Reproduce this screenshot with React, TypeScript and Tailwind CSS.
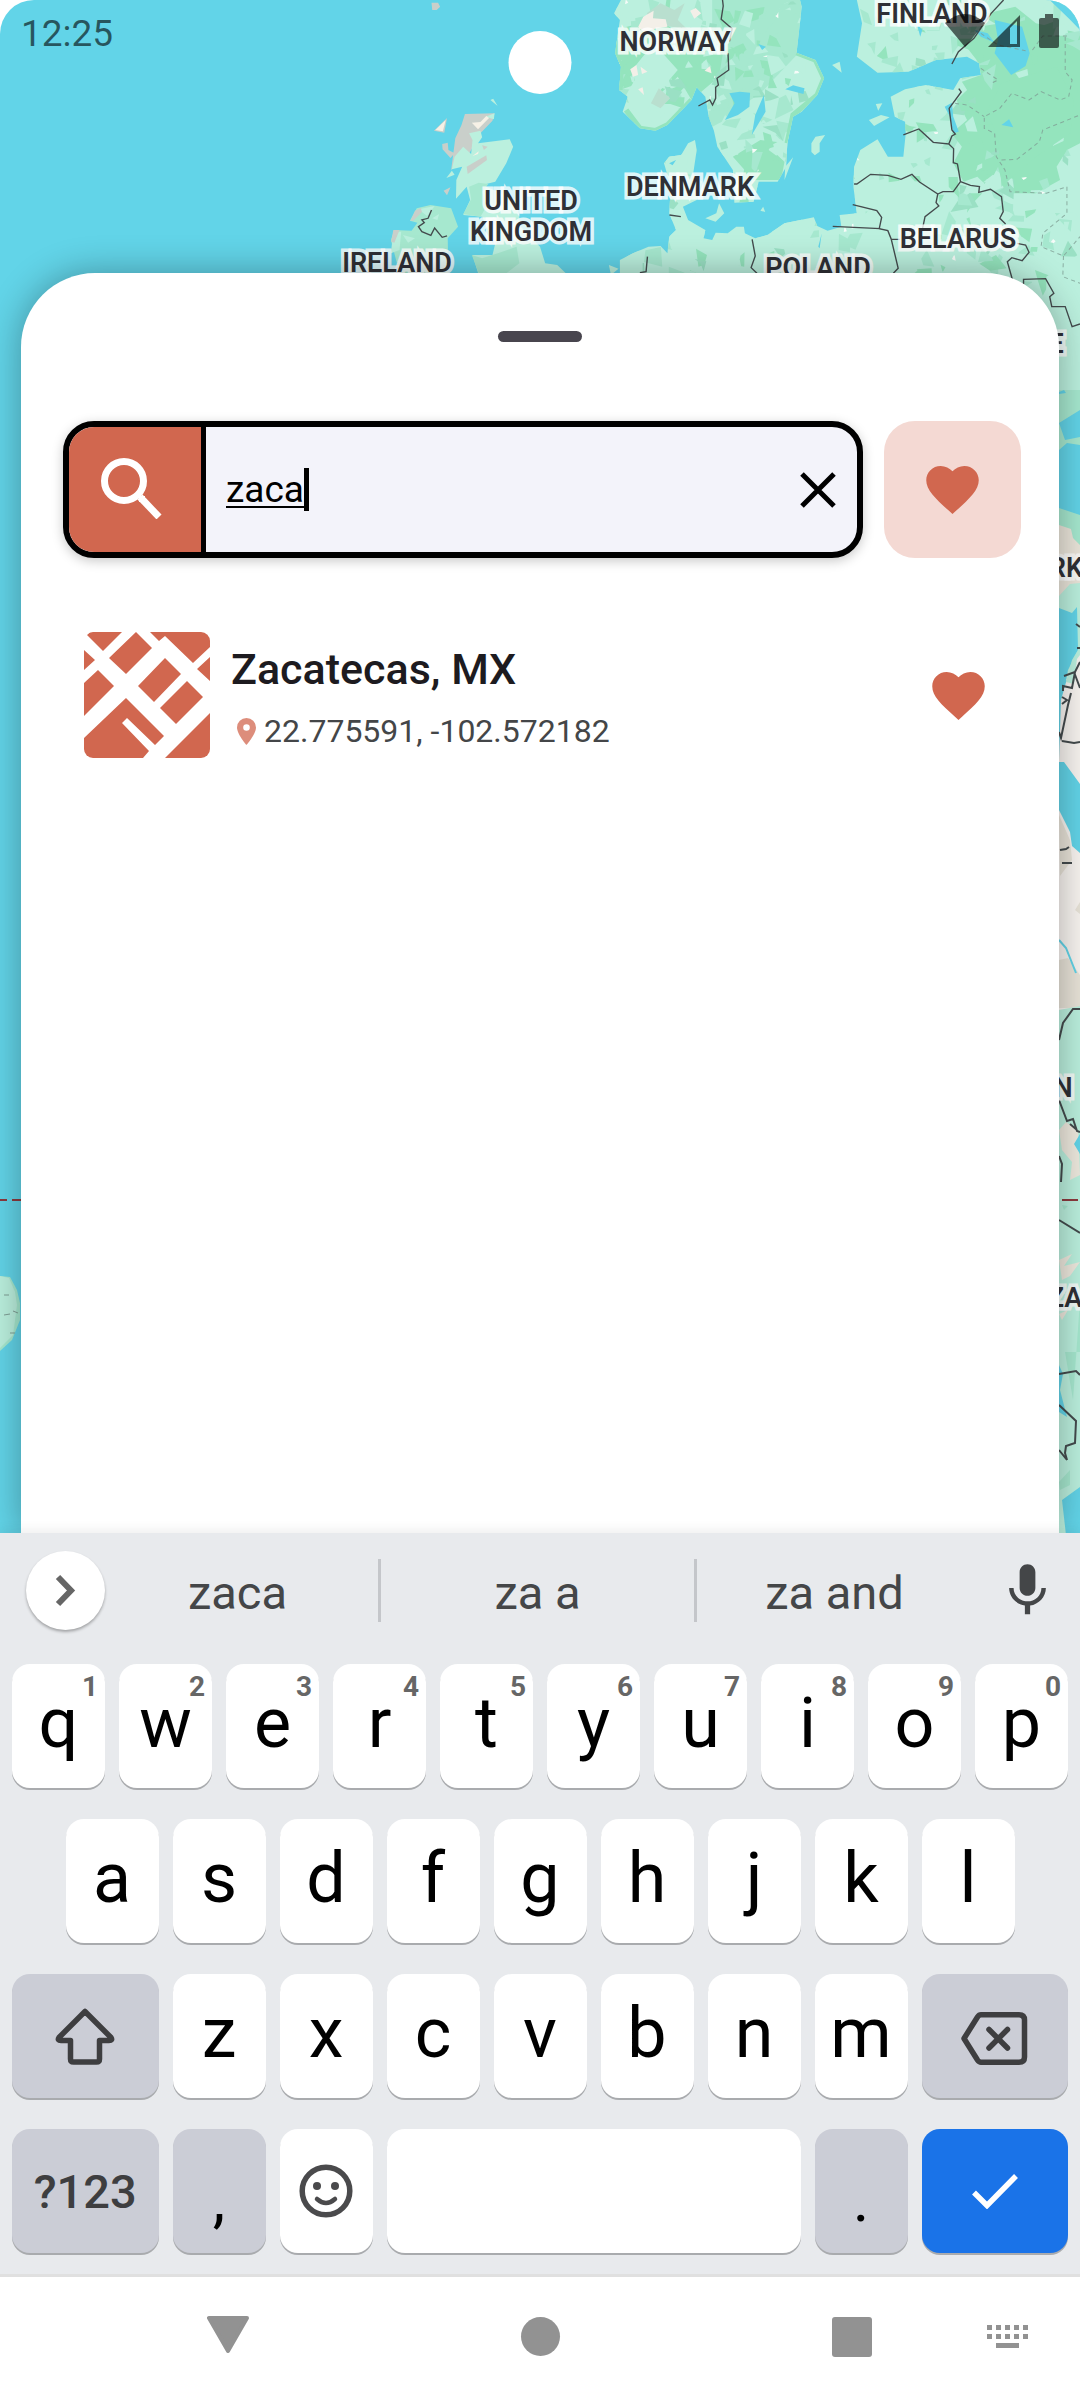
import React, { useState } from "react";

const LAND = "#bbf0de";
const MID = "#a6e8cf";
const DARK = "#94e4bd";
const WATER = "#62d4e8";
const BORDER = "#444b4d";

const BALTIC_LAND =
  "M450 420 455 450 445 520 470 545 455 600 415 620 430 660 480 690 475 715 500 720 510 698 545 700 570 680 592 680 595 700 625 715 660 705 710 670 795 652 805 678 835 692 875 680 870 645 920 640 910 560 912 500 930 450 980 418 1010 470 1055 470 1062 400 1060 365 1030 350 1018 290 1060 268 1120 255 1200 270 1220 235 1280 225 1275 190 1240 170 1150 180 1070 215 980 218 920 170 935 70 920 0 1580 0 1580 1330 1400 1330 1400 870 232 870 232 780 270 760 315 740 350 738 370 760 375 710 395 690 375 640 380 560 360 490 375 470 410 465 430 430Z";
const SCANDINAVIA =
  "M235 0 215 40 232 60 218 160 235 200 230 270 255 290 240 335 290 385 335 392 370 375 440 300 455 262 480 290 490 350 505 392 515 440 560 510 565 608 620 605 635 545 690 545 715 500 718 430 735 350 760 335 805 285 825 235 800 180 745 158 760 20 755 0Z";
const EAST_FOREST =
  "M1230 130 1290 90 1300 40 1380 20 1440 70 1568 100 1568 430 1530 450 1500 500 1510 540 1440 580 1350 580 1330 500 1300 560 1270 530 1230 545 1200 490 1225 440 1195 400 1240 360 1210 300 1240 270 1225 245 1280 225 1275 190Z";

function makePatches(count: number, seed: number, x0: number, y0: number, w: number, h: number) {
  let s = seed;
  const next = () => {
    s = (s * 1664525 + 1013904223) % 4294967296;
    return s / 4294967296;
  };
  const fills = [MID, DARK, LAND, MID, DARK, LAND, MID, LAND, "#9ae0c4"];
  return Array.from({ length: count }, () => {
    const x = x0 + next() * w;
    const y = y0 + next() * h;
    const bright = next() > 0.94;
    const r = bright ? 10 : 14 + next() * 34;
    const pts = [0, 1, 2, 3].map((k) => {
      const a = (k + next()) * 1.57;
      const d = r * (0.25 + next() * 0.8);
      return `${Math.round(x + Math.cos(a) * d)},${Math.round(y + Math.sin(a) * d)}`;
    });
    return { points: pts.join(" "), fill: bright ? "#f6fbf8" : fills[Math.floor(next() * fills.length)] };
  });
}

const SCAN_PATCHES = makePatches(240, 7, 215, 0, 610, 610);
const BALTIC_PATCHES = makePatches(380, 21, 232, 0, 1340, 870);
const FOREST_PATCHES = makePatches(50, 5, 1190, 20, 380, 560);

const LABELS: [string, number, number][] = [
  ["NORWAY", 675, 51],
  ["FINLAND", 932, 23],
  ["DENMARK", 690, 196],
  ["UNITED", 531, 210],
  ["KINGDOM", 531, 241],
  ["IRELAND", 397, 272],
  ["POLAND", 818, 277],
  ["BELARUS", 958, 248],
  ["E", 1056, 353],
  ["RK", 1066, 577],
  ["N", 1063, 1097],
  ["ZA", 1065, 1307],
];

function MapBackground() {
  return (
    <svg
      aria-label="Map"
      className="absolute inset-x-0 top-0 h-[1560px] w-full"
      viewBox="0 0 1080 1560"
      preserveAspectRatio="xMidYMin slice"
    >
      <defs>
        <clipPath id="scan">
          <path d={SCANDINAVIA} />
        </clipPath>
        <clipPath id="baltic">
          <path d={BALTIC_LAND} />
        </clipPath>
      </defs>
      <rect x="-2000" width="5000" height="1560" fill={WATER} />

      {/* British Isles */}
      <g transform="scale(.3444 .3333)">
        <path fill="#c9cfca" d="M1253 8 1272 8 1278 20 1268 30 1255 30ZM1350 342 1436 340 1430 362 1395 400 1360 465 1310 510 1322 415 1340 375ZM1284 432 1300 428 1302 450 1320 460 1308 474 1285 448ZM1288 572 1308 562 1298 586ZM1260 392 1298 354 1290 398Z" />
        <path fill="#f6f1e6" d="M1264 390 1294 360 1286 394Z" />
        <path fill={LAND} d="M1424 300 1432 296 1445 318ZM1410 350 1436 340 1434 358ZM1362 400 1395 392 1400 412 1388 430 1480 418 1490 440 1470 490 1438 545 1400 555 1500 600 1512 680 1568 740 1568 870 1390 825 1372 765 1430 765 1437 735 1400 650 1345 645 1365 600 1355 560 1324 596 1325 540 1342 500 1312 508 1320 470 1345 440 1368 462 1372 420ZM1296 534 1312 512 1320 524Z" />
        <path fill={MID} d="M1362 560 1390 548 1418 552 1400 575 1412 620 1395 650 1345 642 1368 598ZM1370 765 1400 775 1450 758 1500 740 1508 790 1470 820 1390 820ZM1210 625 1250 615 1310 625 1330 680 1300 715 1302 820 1160 820 1135 720 1145 690 1195 692 1212 668 1190 662Z" />
        <path fill={LAND} d="M1142 695 1165 695 1160 750 1135 760ZM1215 628 1262 618 1240 648ZM1170 705 1205 715 1185 728ZM1255 655 1275 642 1270 660Z" />
        <path fill="#c9cfca" d="M1192 662 1205 632 1222 624 1225 636 1200 662ZM1142 690 1160 690 1145 728 1136 725ZM1355 500 1412 466 1414 480 1358 522ZM1400 436 1416 440 1405 450Z" />
        <path fill="#f6f1e6" d="M1370 368 1395 366 1412 348 1420 354 1388 388ZM1372 468 1390 454 1388 462Z" />
        <path fill="none" stroke={BORDER} strokeWidth="4" d="M1253 630 1243 655 1225 660 1232 668 1215 680 1225 695 1251 706 1262 684 1284 712 1298 708" />
      </g>

      {/* Scandinavia, the Baltic and Eastern Europe */}
      <g transform="translate(540 0) scale(.3444 .3333)">
        <path fill={LAND} d={BALTIC_LAND} />
        <path fill={LAND} d={SCANDINAVIA} />
        <g clipPath="url(#scan)">
          <path fill={MID} d="M500 0 760 0 750 160 640 280 540 350 500 240Z" />
          <path fill={DARK} d="M215 90 330 60 540 150 520 230 440 300 400 230 340 290 290 250 230 270ZM560 470 640 420 720 430 700 540 620 540Z" />
          {SCAN_PATCHES.map((p, i) => (
            <polygon key={i} points={p.points} fill={p.fill} />
          ))}
          <path fill="none" stroke={DARK} strokeWidth="16" d="M215 90 222 160 235 200 232 270M250 330 290 385 335 392 370 375 440 300M745 158 800 180 825 235 805 285 735 345 718 430" />
          <path fill={LAND} d="M275 200 330 130 400 210 350 270 300 345 262 320 250 285 275 240Z" />
          <path fill="#b9dfcf" d="M310 40 350 10 390 30 420 10 400 60 430 90 330 70ZM345 265 378 295 350 325 322 310Z" />
          <path fill="#f3efe8" d="M285 80 300 50 330 32 328 55 365 58 370 80 340 85 300 95ZM262 208 280 195 285 225 270 230ZM436 32 452 24 468 40 448 56ZM478 212 494 198 498 220ZM285 268 298 262 302 285ZM292 200 312 215 296 222Z" />
        </g>
        <g clipPath="url(#baltic)">
          {BALTIC_PATCHES.map((p, i) => (
            <polygon key={i} points={p.points} fill={p.fill} />
          ))}
          <path fill={LAND} d="M914 560 1060 540 1130 580 1110 680 1010 690 985 640 920 630Z" />
          <path fill={DARK} d={EAST_FOREST} />
          {FOREST_PATCHES.map((p, i) => (
            <polygon key={i} points={p.points} fill={p.fill} />
          ))}
          <path fill={DARK} d="M1340 250 1500 200 1550 300 1540 400 1440 470 1340 560 1330 420 1300 330Z" />
          <path fill={LAND} d="M1470 830 1568 760 1568 1330 1470 1330Z" />
        </g>
        <path fill={LAND} d="M800 410 828 405 812 430 812 455 798 466 788 456 788 430ZM848 195 870 185 876 218ZM520 610 535 640 510 665 480 655 512 640ZM200 795 228 806 212 820 205 820ZM0 740 15 790 50 795 75 820 0 820ZM955 360 990 345 1015 352 970 378ZM975 312 994 310 982 332ZM710 540 712 500 735 472ZM640 632 648 620 654 636Z" />
        <path fill={WATER} d="M580 275 610 278 608 320 575 345 537 360 565 310 550 280ZM650 285 655 335 615 405 625 345ZM712 268 735 256 768 265 765 282ZM1320 60 1400 80 1422 160 1410 198 1368 225 1320 160 1330 120ZM1175 320 1196 308 1200 350 1216 395 1200 400 1190 350ZM1480 0 1568 20 1568 90 1540 60ZM1340 375 1362 358 1374 382ZM1262 90 1300 100 1320 128 1280 110ZM1094 70 1110 90 1104 110ZM634 132 656 140 645 150ZM375 490 395 480 385 496ZM808 740 818 700 812 745Z" />
        <path
          fill="none"
          stroke={BORDER}
          strokeWidth="4"
          d="M530 0 532 18 526 58 558 86 550 124M546 160 548 210 514 235 518 255 510 262 510 295 501 315 493 300 460 318M1346 0 1310 40 1260 115 1215 155 1196 192M1216 266 1223 276 1188 325 1196 390 1206 402 1196 408 1187 432 1142 427 1100 387 1055 405M1187 432 1201 446 1200 488 1212 492 1221 545 1200 575 1170 575 1155 582 1102 546 1080 523 1048 538 1010 526 960 523 920 552 912 552M1155 582 1150 608 1158 618 1118 650 1110 690M1221 545 1250 556 1276 560 1274 577 1308 568 1340 590 1345 635 1335 655 1352 672M908 614 978 632 992 652 985 686 1010 692 1020 718 1045 718M850 679 988 686M1020 718 1040 805 1026 820M1385 730 1410 735 1420 757 1400 782 1370 773 1357 785 1372 840M616 718 625 768 613 803 630 820M312 770 308 815 290 818M376 645 409 650M1404 852 1404 838 1468 836 1492 880 1480 890 1486 920 1525 920 1545 980 1568 972"
        />
        <path
          fill="none"
          stroke="#7f9f95"
          strokeOpacity=".8"
          strokeWidth="3"
          strokeDasharray="12 10"
          d="M1280 100 1330 135 1410 152M1430 150 1460 108 1530 108M1525 110 1525 215 1545 240 1535 290 1510 300 1455 275 1420 300 1370 280 1335 325 1290 350 1290 385 1320 400 1325 470 1350 510 1365 575 1470 580 1530 560M1205 310 1240 315 1290 350M1340 480 1385 478 1450 425 1460 390 1568 345M1530 560 1530 640 1460 700 1455 740 1520 768 1568 710M1520 768 1518 830 1568 850M1280 205 1330 240 1310 250"
        />
      </g>

      {/* Eastern strip: Black Sea to Southern Africa */}
      <g>
        <path fill={LAND} d="M1059 340H1080V400H1059Z" />
        <path fill={MID} d="M1059 390H1080V580H1059Z" />
        <path fill={WATER} d="M1059 392 1064 390 1066 393 1059 394ZM1059 423 1080 410V437L1065 440ZM1059 450 1067 443 1080 445V515L1059 508Z" />
        <path fill="#eae5da" d="M1059 525 1071 529 1073 538 1080 545V596H1059Z" />
        <path fill={LAND} d="M1059 596 1070 584 1080 583V680H1059Z" />
        <path fill={WATER} d="M1059 608 1072 613 1077 607 1078 650 1068 670 1062 700 1059 735Z" />
        <path fill="#f8f4f0" d="M1080 655 1070 668 1061 700 1059 760V1010H1080Z" />
        <path fill={LAND} d="M1072 660 1078 650 1074 684 1066 682Z" />
        <path fill={WATER} d="M1059 762H1064L1080 784V853L1072 846 1070 832 1059 810Z" />
        <path fill="#e8e3d8" d="M1059 815 1070 840 1072 860 1060 876ZM1080 902 1075 910 1080 914ZM1059 960 1068 958 1080 975V1008H1059Z" />
        <path fill="none" stroke={WATER} strokeWidth="2" d="M1059 940 1066 948 1076 973" />
        <path fill={LAND} d="M1059 1010 1080 1006V1560H1059Z" />
        <path fill={MID} d="M1073 1400 1080 1300V1352H1065ZM1059 1482 1070 1470 1070 1485 1060 1490ZM1062 1205 1068 1206 1064 1210Z" />
        <path fill="#eee9de" d="M1059 1130 1066 1122 1078 1130 1080 1175 1070 1180 1072 1162 1062 1150ZM1059 1260 1072 1254 1064 1266 1080 1262 1070 1276 1062 1280ZM1059 1314 1068 1310 1062 1320Z" />
        <path fill={WATER} d="M1080 1134 1074 1144 1080 1154ZM1059 1365 1063 1374 1060 1390 1067 1417 1059 1412ZM1080 1487 1062 1500 1066 1535H1080Z" />
        <path
          fill="none"
          stroke={BORDER}
          strokeWidth="2"
          d="M1076 624 1080 627M1077 648H1080M1080 662 1075 672 1064 676M1075 672 1072 688 1063 686V691M1074 672 1080 688M1062 697 1067 700 1062 704M1071 693 1068 705 1061 738 1059 732M1062 741 1074 743 1080 742M1060 850 1066 849 1069 847M1062 863H1072M1059 1040 1063 1023 1073 1009H1080M1059 1100 1067 1121 1073 1119 1077 1131 1080 1132M1070 1124 1077 1130M1059 1156 1062 1164 1061 1182M1059 1220 1080 1233M1059 1374 1076 1371 1080 1375M1059 1405 1076 1421 1075 1443 1066 1446 1065 1453 1067 1460 1059 1450"
        />
      </g>

      {/* Equator and Brazil */}
      <path stroke="#8c3a3e" strokeWidth="2" d="M0 1200H7M12 1200H21M1062 1200H1078" />
      <path fill={MID} d="M0 1276 10 1277 17 1290 20 1303 20 1320 12 1340 0 1351Z" />
      <path fill={LAND} d="M0 1276 9 1278 15 1292 17 1305 13 1335 0 1348Z" />
      <path stroke="#7f9f95" strokeWidth="1" d="M4 1295H9M13 1311 18 1313M4 1315 10 1314M10 1333H15" />

      <g
        fontFamily="Roboto, sans-serif"
        fontSize="27"
        fontWeight="600"
        fill="#2f3036"
        stroke="#ffffff"
        strokeOpacity=".8"
        strokeWidth="7"
        paintOrder="stroke"
        textAnchor="middle"
      >
        {LABELS.map(([text, x, y]) => (
          <text key={text} x={x} y={y}>
            {text}
          </text>
        ))}
      </g>
    </svg>
  );
}

function StatusBar() {
  return (
    <header className="relative flex h-[273px] items-start justify-between px-[21px] pt-3 text-black/60">
      <time className="text-[37px] leading-[43px]">12:25</time>
      <svg className="h-9 w-[114px]" viewBox="0 0 114 36" fill="currentColor" aria-label="Wi-Fi, signal and battery">
        <path d="M0 11Q20-7 40 11L20 35Z" />
        <path fillRule="evenodd" d="M43 35 75 3V35ZM65 16V32H72V9Z" />
        <path d="M100 2h8v4h4a2 2 0 0 1 2 2V34a2 2 0 0 1-2 2H96a2 2 0 0 1-2-2V8a2 2 0 0 1 2-2h4Z" />
      </svg>
      <div className="absolute top-[31px] left-1/2 size-[63px] -translate-x-1/2 rounded-full bg-white" />
    </header>
  );
}

function Heart() {
  return (
    <svg className="size-[63px]" viewBox="0 0 24 24" fill="#d1674f" aria-hidden="true">
      <path d="M12 21.35l-1.45-1.32C5.4 15.36 2 12.28 2 8.5 2 5.42 4.42 3 7.5 3c1.74 0 3.41.81 4.5 2.09C13.09 3.81 14.76 3 16.5 3 19.58 3 22 5.42 22 8.5c0 3.78-3.4 6.86-8.55 11.54L12 21.35z" />
    </svg>
  );
}

function MapThumb() {
  return (
    <svg className="size-[126px] shrink-0 rounded-[9px]" viewBox="0 0 126 126" fill="#d1674f" aria-hidden="true">
      <path d="M3 3 6 0H38L19 19ZM52 0 68 16 42 42 25 26ZM66 0H126V15L109 31 81 4 75 9ZM0 18 11 28 0 38ZM14 38 30 54 0 84V51ZM81 26 97 42 70 70 54 54ZM126 25V49L113 37ZM103 49 119 65 92 92 76 76ZM42 66 80 104 71 113 43 86 38 91 65 119 59 126H0V106ZM126 81V126H81Z" />
    </svg>
  );
}

function SearchSheet() {
  const [query, setQuery] = useState("zaca");
  return (
    <main className="relative mx-[21px] flex-1 rounded-t-[74px] bg-white pt-[58px] shadow-[0_0_36px_rgba(0,0,0,0.32)]">
      <div className="mx-auto h-[11px] w-[84px] rounded-full bg-[#48454e]" />
      <div className="mt-[79px] flex gap-[21px] pr-[38px] pl-[42px]">
        <div className="flex h-[137px] flex-1 overflow-hidden rounded-[31px] border-6 border-black bg-[#f3f3fa] shadow-[0_3px_12px_rgba(0,0,0,0.22)]">
          <button aria-label="Search" className="flex w-[137px] shrink-0 items-center justify-center border-r-5 border-black bg-[#d1674f] pr-2 pb-1">
            <svg className="size-[62px]" viewBox="0 0 62 62" fill="none" stroke="#fff" aria-hidden="true">
              <circle cx="24" cy="24" r="19.5" strokeWidth="7" />
              <path strokeWidth="7" d="M40 40 59 60" />
              <path fill="#fff" stroke="none" d="M39 39H45V45H39Z" />
            </svg>
          </button>
          <label className="flex min-w-0 flex-1 items-center pl-5">
            <span className="sr-only">Search places</span>
            <input
              value={query}
              onChange={(e) => setQuery(e.target.value)}
              className="field-sizing-content max-w-full min-w-0 bg-transparent text-[37px] leading-[43px] text-black underline decoration-2 underline-offset-4 outline-none"
            />
            <span className="h-[43px] w-[5px] bg-black" />
          </label>
          <button aria-label="Clear" className="mr-[21px] flex w-9 shrink-0 items-center justify-center">
            <svg className="size-9" viewBox="0 0 36 36" stroke="#000" strokeWidth="5" aria-hidden="true">
              <path d="M2 2 34 34M34 2 2 34" />
            </svg>
          </button>
        </div>
        <button aria-label="Favourites" className="flex size-[137px] items-center justify-center rounded-[31px] bg-[#f4d9d3]">
          <Heart />
        </button>
      </div>
      <ul className="mt-[74px] pr-[69px] pl-[63px]">
        <li className="flex items-start">
          <MapThumb />
          <div className="flex-1 pt-1 pl-[21px]">
            <h2 className="text-[43px] leading-[66px] font-medium text-[#1d1b20]">Zacatecas, MX</h2>
            <p className="flex h-[58px] items-center pl-[6px] text-[32px] text-[#444648]">
              <svg className="mr-2 h-[27px] w-[19px]" viewBox="0 0 19 27" fill="#d1674f" fillOpacity=".75" aria-hidden="true">
                <path fillRule="evenodd" d="M9.5 0A9.5 9.5 0 0 0 0 9.5C0 16 9.5 27 9.5 27S19 16 19 9.5A9.5 9.5 0 0 0 9.5 0Zm0 6.2a3.3 3.3 0 1 1 0 6.6a3.3 3.3 0 0 1 0-6.6Z" />
              </svg>
              22.775591, -102.572182
            </p>
          </div>
          <button aria-label="Remove from favourites" className="mt-8">
            <Heart />
          </button>
        </li>
      </ul>
    </main>
  );
}

function Key({
  children,
  label,
  hint,
  className = "col-span-2 bg-white pb-[6px]",
}: {
  children?: React.ReactNode;
  label?: string;
  hint?: string;
  className?: string;
}) {
  return (
    <button
      aria-label={label}
      className={`relative flex h-[124px] items-center justify-center rounded-[18px] text-[70px] leading-none text-black shadow-[0_2px_0_#a9abae] ${className}`}
    >
      {children}
      {hint && <span className="absolute top-[9px] right-[7px] text-[28px] leading-7 font-bold text-[#666]">{hint}</span>}
    </button>
  );
}

function Keyboard() {
  return (
    <section aria-label="Keyboard" className="relative border-b-3 border-[#e0e0e0] bg-[#e8eaed] pb-[21px] shadow-[0_-2px_12px_rgba(0,0,0,0.08)]">
      <div className="flex h-[115px] items-center pl-[26px]">
        <button aria-label="More tools" className="flex size-[79px] items-center justify-center rounded-full bg-white shadow-[0_2px_3px_rgba(0,0,0,0.3)]">
          <svg className="size-9" viewBox="0 0 36 36" fill="none" stroke="#666" strokeWidth="6" aria-hidden="true">
            <path d="M10 4 23 17.5 10 31" />
          </svg>
        </button>
        <div className="grid h-[63px] flex-1 grid-cols-[276px_316px_1fr] text-[47px] leading-[55px] text-[#444648]">
          <button className="border-r-3 border-[#c4c6ca] pt-1 pr-2">zaca</button>
          <button className="border-r-3 border-[#c4c6ca] pt-1">za a</button>
          <button className="pt-1 pr-6">za and</button>
        </div>
        <button aria-label="Voice input" className="mr-[21px] flex w-[63px] justify-center">
          <svg className="size-[63px]" viewBox="0 0 24 24" fill="#444648" aria-hidden="true">
            <path d="M12 14c1.66 0 3-1.34 3-3V5c0-1.66-1.34-3-3-3S9 3.34 9 5v6c0 1.66 1.34 3 3 3zm5.3-3c0 3-2.54 5.1-5.3 5.1S6.7 14 6.7 11H5c0 3.41 2.72 6.23 6 6.72V21h2v-3.28c3.28-.48 6-3.3 6-6.72h-1.7z" />
          </svg>
        </button>
      </div>
      <div className="grid grid-cols-20 gap-x-[14px] gap-y-[31px] px-3 pt-4">
        {"qwertyuiop".split("").map((c, i) => (
          <Key key={c} hint={String((i + 1) % 10)}>
            {c}
          </Key>
        ))}
        {"asdfghjkl".split("").map((c) => (
          <Key key={c} className={c === "a" ? "col-span-2 col-start-2 bg-white pb-[6px]" : "col-span-2 bg-white pb-[6px]"}>
            {c}
          </Key>
        ))}
        <Key label="Shift" className="col-span-3 col-start-1 bg-[#cbcdd6]">
          <svg className="h-[58px] w-[60px]" viewBox="0 0 60 58" fill="none" stroke="#3e3e40" strokeWidth="5.5" strokeLinejoin="round" aria-hidden="true">
            <path d="M30 4.5 4 30.5Q2 33.5 6 33.5H15.5V52Q15.5 55 18.5 55H41.5Q44.5 55 44.5 52V33.5H54Q58 33.5 56 30.5Z" />
          </svg>
        </Key>
        {"zxcvbnm".split("").map((c) => (
          <Key key={c}>{c}</Key>
        ))}
        <Key label="Backspace" className="col-span-3 bg-[#cbcdd6] pt-1">
          <svg className="h-[53px] w-[67px]" viewBox="0 0 67 53" fill="none" stroke="#3e3e40" strokeWidth="5.5" strokeLinejoin="round" strokeLinecap="round" aria-hidden="true">
            <path d="M20 2.75H58Q63.5 2.75 63.5 8V45Q63.5 50.25 58 50.25H20Q18 50.25 16.5 48L3 26.5 16.5 5Q18 2.75 20 2.75ZM28 17.5 46.5 36M46.5 17.5 28 36" />
          </svg>
        </Key>
        <Key className="col-span-3 bg-[#cbcdd6]">
          <span className="text-[47px] font-medium text-[#3e3e40]">?123</span>
        </Key>
        <Key className="col-span-2 bg-[#cbcdd6]">
          <span className="pt-4 text-[63px] leading-[71px]">,</span>
        </Key>
        <Key label="Emoji" className="col-span-2 bg-white">
          <svg className="size-[54px]" viewBox="0 0 54 54" fill="none" stroke="#4a4a4c" strokeWidth="5.5" aria-hidden="true">
            <circle cx="27" cy="27" r="23.8" />
            <circle cx="18" cy="22" r="4" fill="#4a4a4c" stroke="none" />
            <circle cx="36" cy="22" r="4" fill="#4a4a4c" stroke="none" />
            <path strokeWidth="4.5" strokeLinecap="round" d="M18 35Q27 43 36 35" />
          </svg>
        </Key>
        <Key label="Space" className="col-span-8 bg-white" />
        <Key className="col-span-2 bg-[#cbcdd6]">
          <span className="pt-4 text-[63px] leading-[71px]">.</span>
        </Key>
        <Key label="Done" className="col-span-3 bg-[#1a73e8]">
          <svg className="h-9 w-[48px]" viewBox="0 0 48 36" fill="none" stroke="#fff" strokeWidth="5.5" aria-hidden="true">
            <path d="M3 19.5 16 32.5 45 3" />
          </svg>
        </Key>
      </div>
    </section>
  );
}

function NavBar() {
  return (
    <nav className="relative flex h-[123px] items-center bg-white pr-[52px] pb-1 pl-[72px] text-[#929292]">
      <button aria-label="Hide keyboard" className="flex flex-1 justify-center">
        <svg className="h-11 w-[42px]" viewBox="0 0 42 44" fill="currentColor" stroke="currentColor" strokeWidth="4" strokeLinejoin="round" aria-hidden="true">
          <path d="M2 3H40L21 36Z" />
        </svg>
      </button>
      <button aria-label="Home" className="flex flex-1 justify-center">
        <span className="size-[39px] rounded-full bg-current" />
      </button>
      <button aria-label="Recent apps" className="flex flex-1 justify-center">
        <span className="size-10 rounded-[3px] bg-current" />
      </button>
      <button aria-label="Switch keyboard" className="-ml-[21px] flex w-[41px] justify-center">
        <svg className="h-[23px] w-[41px]" viewBox="0 0 41 23" fill="currentColor" aria-hidden="true">
          <path d="M0 0h5v5H0zM9 0h5v5H9zM18 0h5v5h-5zM27 0h5v5h-5zM36 0h5v5h-5zM0 9h5v5H0zM9 9h5v5H9zM18 9h5v5h-5zM27 9h5v5h-5zM36 9h5v5h-5zM9 18h23v5H9z" />
        </svg>
      </button>
    </nav>
  );
}

export default function App() {
  return (
    <div className="bg-white font-['Roboto',sans-serif]">
      <div className="relative flex min-h-screen flex-col overflow-hidden rounded-t-[34px] bg-white">
        <MapBackground />
        <StatusBar />
        <SearchSheet />
        <Keyboard />
        <NavBar />
      </div>
    </div>
  );
}
